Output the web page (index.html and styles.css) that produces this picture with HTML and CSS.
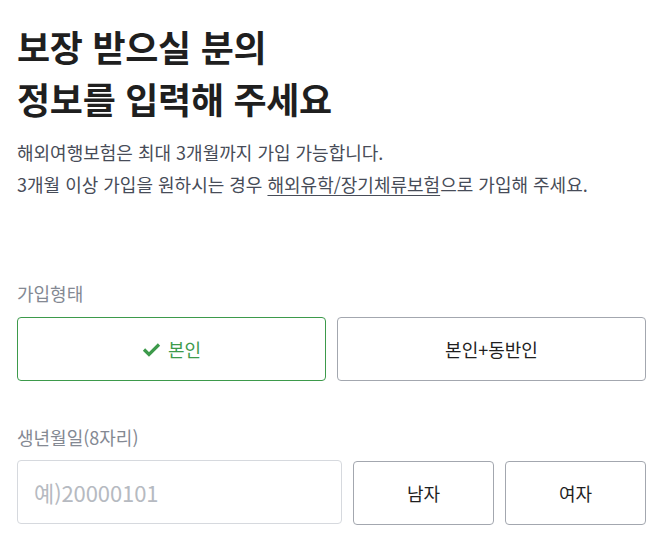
FILE: index.html
```html
<!DOCTYPE html>
<html lang="ko">
<head>
<meta charset="utf-8">
<link rel="stylesheet" href="styles.css">
</head>
<body>
<main class="page">
  <h1 class="title">보장 받으실 분의<br>정보를 입력해 주세요</h1>
  <p class="desc">해외여행보험은 최대 3개월까지 가입 가능합니다.<br>3개월 이상 가입을 원하시는 경우 <a class="link" href="#">해외유학/장기체류보험</a>으로 가입해 주세요.</p>

  <section class="field field-type">
    <div class="label">가입형태</div>
    <div class="row two">
      <button class="opt selected" type="button">
        <svg class="check" width="19" height="15" viewBox="0 0 19 15"><path d="M2 7.5 L7 12.5 L17 2.5" fill="none" stroke="#3d9a4b" stroke-width="3.2"/></svg>
        <span>본인</span>
      </button>
      <button class="opt" type="button">본인+동반인</button>
    </div>
  </section>

  <section class="field field-birth">
    <div class="label">생년월일(8자리)</div>
    <div class="row birth">
      <input class="input" type="text" placeholder="예)20000101">
      <button class="opt" type="button">남자</button>
      <button class="opt" type="button">여자</button>
    </div>
  </section>
</main>
</body>
</html>
```

FILE: styles.css
```css
* { box-sizing: border-box; }
html, body { margin: 0; padding: 0; background: #fff; }
body {
  font-family: "Noto Sans CJK KR", "Noto Sans", sans-serif;
  color: #222;
}
.page {
  padding: 20px 16px 0 17px;
}
.title {
  margin: 0;
  font-size: 36px;
  line-height: 52px;
  font-weight: 700;
  letter-spacing: -0.3px;
  color: #1f1f1f;
}
.desc {
  margin: 12px 0 0;
  font-size: 18px;
  line-height: 32px;
  color: #474c58;
}
.link {
  color: #474c58;
  text-decoration: underline;
  text-underline-offset: 3px;
}
.field-type { margin-top: 81px; }
.field-birth { margin-top: 44px; }
.label {
  font-size: 18px;
  line-height: 24px;
  color: #848993;
}
.row {
  display: flex;
  margin-top: 12px;
}
.row.two { gap: 11px; }
.row.two .opt { flex: 1; }
.row.birth { gap: 11px; margin-top: 11px; align-items: flex-start; }
.opt {
  height: 64px;
  border: 1px solid #a3a7af;
  border-radius: 4px;
  background: #fff;
  font-family: inherit;
  font-size: 18px;
  color: #1f1f1f;
  display: flex;
  align-items: center;
  justify-content: center;
  gap: 7px;
  padding: 0;
  cursor: pointer;
}
.opt.selected {
  border-color: #3d9a4b;
  color: #3d9a4b;
}
.check { display: block; }
.birth .opt { width: 141px; flex: none; margin-top: 1px; }
.input {
  width: 326px;
  height: 64px;
  border: 1px solid #d6d9de;
  border-radius: 4px;
  padding: 0 16px;
  font-family: inherit;
  font-size: 22px;
  color: #222;
  outline: none;
}
.input::placeholder { color: #b6bac1; letter-spacing: -0.1px; }
```
